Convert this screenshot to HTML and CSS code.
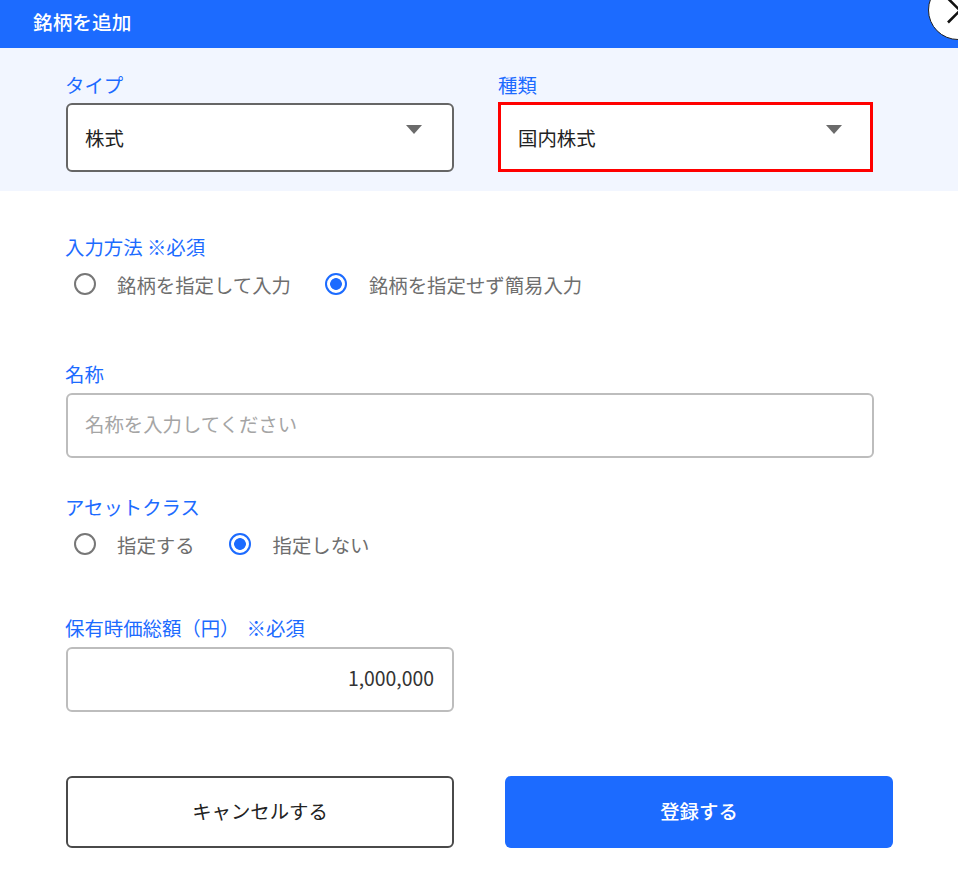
FILE: index.html
```html
<!DOCTYPE html>
<html lang="ja">
<head>
<meta charset="utf-8">
<title>銘柄を追加</title>
<link rel="stylesheet" href="styles.css">
</head>
<body>
<div class="modal">
  <header class="head">銘柄を追加</header>
  <button class="close" aria-label="閉じる">
    <svg width="60" height="60" viewBox="0 0 60 60"><path d="M20 5.5 L44 29.5 M44 5.5 L20 29.5" fill="none" stroke="#111" stroke-width="2.6"/></svg>
  </button>
  <section class="band">
    <div class="col">
      <div class="label">タイプ</div>
      <div class="select"><span>株式</span><i class="arrow"></i></div>
    </div>
    <div class="col col-b">
      <div class="label">種類</div>
      <div class="select select-red"><span>国内株式</span><i class="arrow"></i></div>
    </div>
  </section>
  <section class="form">
    <div class="label">入力方法 ※必須</div>
    <div class="radios r1">
      <label class="radio"><i class="dot"></i>銘柄を指定して入力</label>
      <label class="radio"><i class="dot on"></i>銘柄を指定せず簡易入力</label>
    </div>
    <div class="label l-name">名称</div>
    <div class="input placeholder">名称を入力してください</div>
    <div class="label l-asset">アセットクラス</div>
    <div class="radios r2">
      <label class="radio"><i class="dot"></i>指定する</label>
      <label class="radio"><i class="dot on"></i>指定しない</label>
    </div>
    <div class="label l-amount">保有時価総額（円）<span class="req">※必須</span></div>
    <div class="input amount">1,000,000</div>
    <div class="actions">
      <button class="btn cancel">キャンセルする</button>
      <button class="btn submit">登録する</button>
    </div>
  </section>
</div>
</body>
</html>
```
FILE: styles.css
```css
* { box-sizing: border-box; }
html, body { margin: 0; padding: 0; background: #fff; }
body { overflow: hidden; height: 887px; }
.modal {
  position: relative;
  width: 958px;
  height: 887px;
  overflow: hidden;
  font-family: "Noto Sans CJK JP", "Noto Sans", sans-serif;
  font-size: 19.4px;
  color: #222;
}
.head {
  height: 48px;
  padding: 0 33px;
  background: #1c6bff;
  color: #fff;
  font-size: 19.7px;
  font-weight: 500;
  line-height: 44px;
}
.close {
  position: absolute;
  left: 928px;
  top: -20px;
  width: 60px;
  height: 60px;
  padding: 0;
  border: 1.5px solid #222;
  border-radius: 50%;
  background: #fff;
}
.close svg { position: absolute; left: -1.5px; top: 12px; }
.band {
  height: 143px;
  padding: 23px 85px 0 66px;
  background: #f2f6ff;
  display: flex;
}
.col { width: 388px; }
.col-b { width: 375px; margin-left: 44px; }
.label {
  color: #1c6bff;
  height: 28px;
  line-height: 28px;
  margin-left: -1px;
}
.col-b .label { margin-left: 0; }
.select {
  position: relative;
  height: 69px;
  margin-top: 4px;
  padding: 0 17px;
  display: flex;
  align-items: center;
  background: #fff;
  border: 2px solid #666;
  border-radius: 6px;
}
.select-red {
  height: 70px;
  margin-top: 3px;
  padding-left: 17px;
  border: 3px solid #f00;
  border-radius: 0;
}
.arrow {
  position: absolute;
  right: 30px;
  top: 20px;
  width: 0;
  height: 0;
  border-left: 8.5px solid transparent;
  border-right: 8.5px solid transparent;
  border-top: 9px solid #6b6b6b;
}
.select-red .arrow { right: 28px; }
.form { padding: 42px 0 0 66px; }
.radios { display: flex; align-items: center; height: 30px; margin-top: 8px; padding-left: 8px; color: #6e6e6e; }
.radio { display: flex; align-items: center; margin-right: 34px; }
.dot {
  width: 22px;
  height: 22px;
  margin-right: 21px;
  border: 2px solid #777;
  border-radius: 50%;
  background: #fff;
}
.dot.on {
  margin-right: 22px;
  border-color: #1c6bff;
  background: radial-gradient(circle, #1c6bff 0 5.5px, #fff 6.2px);
}
.l-name { margin-top: 61px; }
.input {
  display: flex;
  align-items: center;
  height: 65px;
  margin-top: 5px;
  padding: 0 17px 4px;
  border: 2px solid #bdbdbd;
  border-radius: 6px;
  background: #fff;
}
.placeholder { width: 808px; color: #a5a5a5; }
.l-asset { margin-top: 35px; }
.l-amount { margin-top: 55px; }
.req { margin-left: 7px; }
.amount {
  width: 388px;
  margin-top: 5px;
  padding-right: 18px;
  justify-content: flex-end;
  color: #333;
}
.actions { display: flex; gap: 51px; margin-top: 64px; }
.btn {
  width: 388px;
  height: 72px;
  padding: 0 0 4px;
  border-radius: 6px;
  font: 500 19.4px "Noto Sans CJK JP", "Noto Sans", sans-serif;
}
.cancel { background: #fff; border: 2px solid #4a4a4a; color: #222; font-weight: 400; }
.submit { background: #1c6bff; border: 0; color: #fff; }
```
